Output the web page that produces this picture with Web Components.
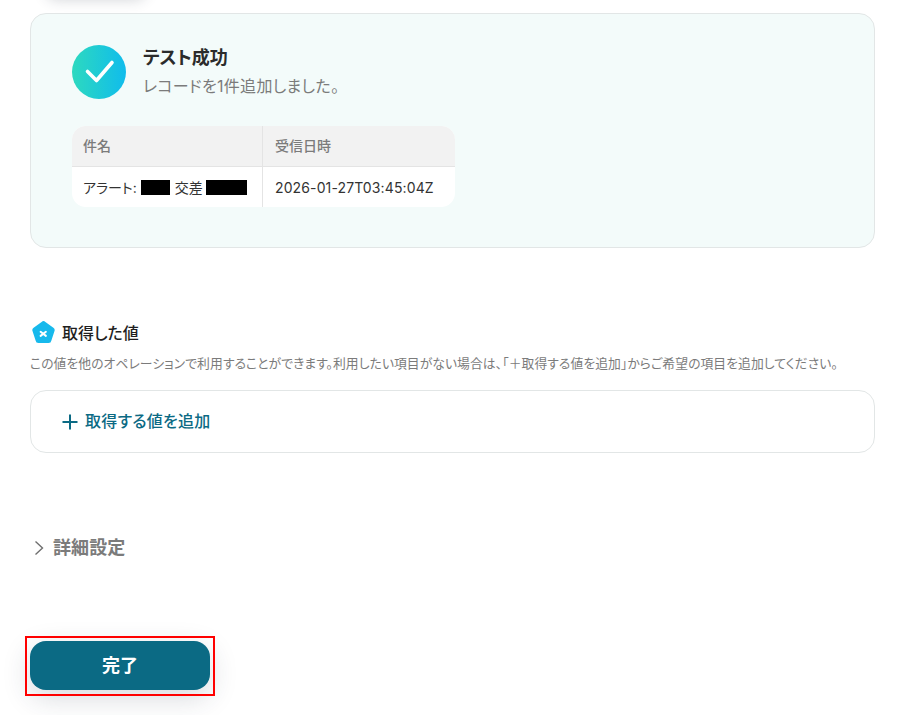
<!DOCTYPE html>
<html lang="ja">
<head>
<meta charset="utf-8">
<style>
  html, body { margin: 0; padding: 0; background: #fff; }
  body {
    width: 901px;
    height: 715px;
    overflow: hidden;
    font-family: Inter, "Noto Sans CJK JP", sans-serif;
    font-feature-settings: "palt";
    color: #2b2b2b;
  }
</style>
</head>
<body>
<page-view>
  <test-result slot="result" title="テスト成功" message="レコードを1件追加しました。"></test-result>
  <values-section slot="values"></values-section>
  <detail-toggle slot="detail">詳細設定</detail-toggle>
  <done-button slot="action">完了</done-button>
</page-view>

<script>
class PageView extends HTMLElement {
  constructor() {
    super();
    this.attachShadow({ mode: "open" });
    this.shadowRoot.innerHTML = `
      <style>
        :host { display: block; padding: 0 26px 0 30px; height: 715px; overflow: hidden; box-sizing: border-box; }
        .prev-shadow { height: 13px; overflow: hidden; margin: 0 -26px 0 -30px; padding-left: 46px; }
        .prev-shadow div {
          width: 100px;
          height: 20px;
          margin-top: -24px;
          border-radius: 14px;
          box-shadow: 0 4px 14px rgba(40, 50, 70, 0.2);
        }
        .values { margin-top: 72px; }
        .detail { margin-top: 81px; }
        .action { margin-top: 83px; }
      </style>
      <div class="prev-shadow"><div></div></div>
      <slot name="result"></slot>
      <div class="values"><slot name="values"></slot></div>
      <div class="detail"><slot name="detail"></slot></div>
      <div class="action"><slot name="action"></slot></div>
    `;
  }
}

class TestResult extends HTMLElement {
  constructor() {
    super();
    this.attachShadow({ mode: "open" });
  }

  connectedCallback() {
    this.shadowRoot.innerHTML = `
      <style>
        :host {
          display: block;
          box-sizing: border-box;
          height: 235px;
          padding: 31px 41px;
          background: #f3fbfa;
          border: 1px solid #e2e6e6;
          border-radius: 16px;
        }
        .head { display: flex; gap: 17px; }
        .icon { width: 54px; height: 54px; flex: none; }
        .title { font-size: 18px; line-height: 26px; font-weight: 700; color: #2b2b2b; }
        .message { font-size: 16px; line-height: 20px; color: #7b7b7b; margin-top: 5px; letter-spacing: 0.3px; }
        result-table { margin-top: 27px; }
      </style>
      <div class="head">
        <svg class="icon" viewBox="0 0 54 54">
          <defs>
            <linearGradient id="g" x1="0" y1="0" x2="1" y2="0">
              <stop offset="0" stop-color="#2dd9bf"/>
              <stop offset="1" stop-color="#10bcec"/>
            </linearGradient>
          </defs>
          <circle cx="27" cy="27" r="27" fill="url(#g)"/>
          <path d="M15.5 26.5 L24.5 35.5 L40 17.5" fill="none" stroke="#fff" stroke-width="3.6" stroke-linecap="round" stroke-linejoin="round"/>
        </svg>
        <div>
          <div class="title">${this.getAttribute("title")}</div>
          <div class="message">${this.getAttribute("message")}</div>
        </div>
      </div>
      <result-table></result-table>
    `;
  }
}

class ResultTable extends HTMLElement {
  constructor() {
    super();
    this.attachShadow({ mode: "open" });
    this.shadowRoot.innerHTML = `
      <style>
        :host {
          display: grid;
          grid-template-columns: 191px 192px;
          grid-template-rows: 41px 40px;
          width: 383px;
          border-radius: 14px;
          overflow: hidden;
          background: #fff;
          font-size: 14px;
        }
        .cell { display: flex; align-items: center; padding: 0 11px; box-sizing: border-box; white-space: nowrap; }
        .first { border-right: 1px solid #e4e4e4; }
        .th { background: #f2f2f2; color: #7b7b7b; font-weight: 500; border-bottom: 1px solid #e4e4e4; padding-bottom: 2px; }
        .td { color: #333; }
        .second { padding-left: 12px; }
        .date { letter-spacing: 0.12px; }
        .mask { display: inline-block; height: 15px; background: #000; }
        .m1 { width: 29px; margin: 0 5px 0 4px; }
        .m2 { width: 41px; margin-left: 3px; }
      </style>
      <div class="cell th first">件名</div>
      <div class="cell th second">受信日時</div>
      <div class="cell td first">アラート:<span class="mask m1"></span>交差<span class="mask m2"></span></div>
      <div class="cell td second date">2026-01-27T03:45:04Z</div>
    `;
  }
}

class ValuesSection extends HTMLElement {
  constructor() {
    super();
    this.attachShadow({ mode: "open" });
    this.shadowRoot.innerHTML = `
      <style>
        :host { display: block; }
        .head { display: flex; align-items: center; gap: 7px; padding-left: 2px; height: 24px; }
        .head svg { width: 23px; height: 23px; flex: none; }
        .head span { font-size: 16px; font-weight: 500; color: #1f1f1f; }
        .note { font-size: 12.8px; line-height: 18px; color: #7b7b7b; margin-top: 11px; white-space: nowrap; letter-spacing: 0.07px; }
        .add {
          display: flex;
          align-items: center;
          gap: 7px;
          box-sizing: border-box;
          height: 63px;
          margin-top: 17px;
          padding-left: 31px;
          border: 1px solid #e2e6e6;
          border-radius: 16px;
          color: #0b6a84;
          font-size: 16px;
          font-weight: 500;
          letter-spacing: 0.25px;
        }
        .add svg { width: 16px; height: 16px; flex: none; }
        .add span { margin-bottom: 3px; }
      </style>
      <div class="head">
        <svg viewBox="0 0 23 23">
          <path d="M9.6 .9 a3 3 0 0 1 3.8 0 l8 5.8 a3 3 0 0 1 1.1 3.4 l-3.1 9.3 a3 3 0 0 1 -2.9 2.6 H6.5 a3 3 0 0 1 -2.9 -2.6 L.5 10.1 a3 3 0 0 1 1.1 -3.4 z" fill="#17b9ec"/>
          <path d="M8.6 10.8 L13.9 14.9 M13.9 10.8 L8.6 14.9" stroke="#fff" stroke-width="2" stroke-linecap="round" fill="none"/>
        </svg>
        <span>取得した値</span>
      </div>
      <div class="note">この値を他のオペレーションで利用することができます。利用したい項目がない場合は、「＋取得する値を追加」からご希望の項目を追加してください。</div>
      <div class="add">
        <svg viewBox="0 0 16 16"><path d="M8 .5 V15.5 M.5 8 H15.5" stroke="#0b6a84" stroke-width="2" fill="none"/></svg>
        <span>取得する値を追加</span>
      </div>
    `;
  }
}

class DetailToggle extends HTMLElement {
  constructor() {
    super();
    this.attachShadow({ mode: "open" });
    this.shadowRoot.innerHTML = `
      <style>
        :host { display: flex; align-items: center; gap: 8px; height: 24px; padding-left: 3px; color: #7b7b7b; font-size: 18px; font-weight: 700; letter-spacing: 0.1px; }
        svg { width: 12px; height: 16px; flex: none; margin-top: 4px; }
      </style>
      <svg viewBox="0 0 12 16"><path d="M2.5 1.5 L9.5 8 L2.5 14.5" fill="none" stroke="#6f6f6f" stroke-width="1.4"/></svg>
      <slot></slot>
    `;
  }
}

class DoneButton extends HTMLElement {
  constructor() {
    super();
    this.attachShadow({ mode: "open" });
    this.shadowRoot.innerHTML = `
      <style>
        :host { display: block; width: 180px; position: relative; }
        button {
          display: block;
          width: 180px;
          height: 49px;
          padding: 0 0 4px;
          border: 0;
          border-radius: 16px;
          background: #0b6a84;
          color: #fff;
          font: 700 18px Inter, "Noto Sans CJK JP", sans-serif;
          font-feature-settings: "palt";
          box-shadow: 0 8px 28px rgba(40, 50, 70, 0.18);
        }
        .mark { position: absolute; left: -5px; top: -5px; width: 190px; height: 60px; box-sizing: border-box; border: 2px solid #f00; }
      </style>
      <button><slot></slot></button>
      <div class="mark"></div>
    `;
  }
}

customElements.define("page-view", PageView);
customElements.define("test-result", TestResult);
customElements.define("result-table", ResultTable);
customElements.define("values-section", ValuesSection);
customElements.define("detail-toggle", DetailToggle);
customElements.define("done-button", DoneButton);
</script>
</body>
</html>
